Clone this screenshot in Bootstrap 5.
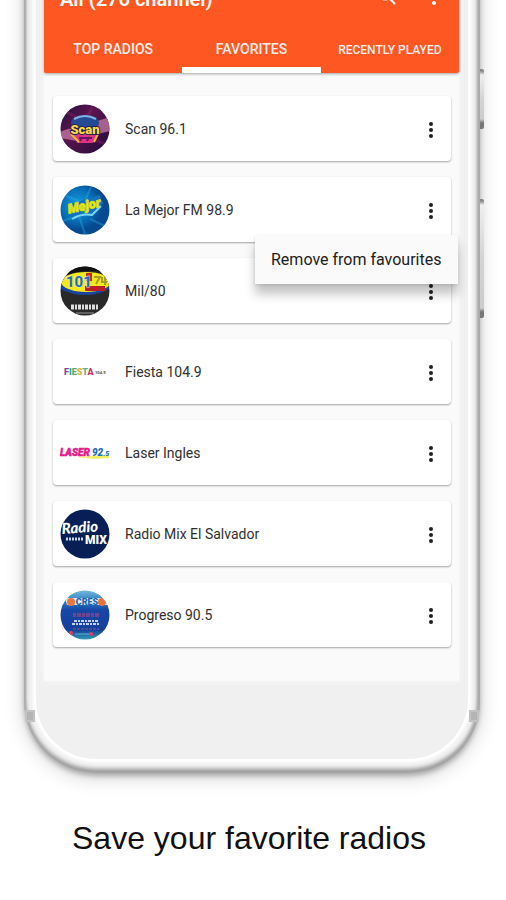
<!DOCTYPE html>
<html lang="en">
<head>
<meta charset="utf-8">
<meta name="viewport" content="width=device-width, initial-scale=1">
<title>Favorite radios</title>
<link href="https://cdn.jsdelivr.net/npm/bootstrap@5.3.0/dist/css/bootstrap.min.css" rel="stylesheet">
<style>
  body { font-family: Roboto, "Liberation Sans", sans-serif; background: #fff; overflow: hidden; }
  .phone {
    margin: -24px 26px 0 24px; padding: 0 12px 14px; border-radius: 0 0 72px 72px;
    background: #f4f4f4;
    box-shadow: inset 2px 0 2px #aaa, inset -3px 0 3px #a8a8a8, inset 0 -4px 4px #999, inset 0 0 9px #bbb,
      0 3px 5px rgba(0,0,0,.25), 0 4px 20px rgba(0,0,0,.18);
  }
  .face { background: #f0f0f0; border-radius: 0 0 60px 60px; padding: 0 9px 78px 8px; box-shadow: 0 0 2px 3px #fff; }
  .side-key { position: absolute; left: 100%; width: 4px; background: linear-gradient(#888 0 2px, #eee 6px, #d4d4d4 50%, #ccc calc(100% - 10px), #777 calc(100% - 6px)); border-radius: 0 2px 2px 0; }
  .key-up { top: 93px; height: 60px; }
  .key-down { top: 223px; height: 119px; }
  .antenna { position: absolute; bottom: 51px; width: 10px; height: 12px; background: #b4b4b4; border: 2px solid #c2c2c2; }
  .antenna-l { left: 1px; }
  .antenna-r { right: 1px; }
  .screen { background: #fafafa; box-shadow: 0 0 6px #fafafa; padding-bottom: 34px; }
  .appbar { background: #ff5722; color: #fff; box-shadow: 0 1px 3px rgba(0,0,0,.35); border-radius: 0 0 2px 2px; }
  .toolbar { height: 46px; padding: 0 16px; }
  .toolbar h1 { font-size: 20px; line-height: 24px; font-weight: 600; }
  .tool-icons { gap: 26px; padding-bottom: 4px; }
  .icon-btn { border: 0; background: none; padding: 0; line-height: 0; color: inherit; }
  .tabs button { height: 51px; padding: 10px 0 0; border: 0; border-bottom: 6px solid transparent; background: none; color: #fff0eb; font-size: 14px; font-weight: 500; white-space: nowrap; }
  .tabs button.active { border-bottom-color: #fff; }
  .tabs button.tab-small { font-size: 12px; }
  .stations { gap: 16px; padding: 23px 8px 0 9px; }
  .station { height: 65px; padding: 0 12px 0 7px; background: #fff; border-radius: 4px; box-shadow: 0 1px 2px rgba(0,0,0,.35); font-size: 14px; line-height: 20px; color: #303030; }
  .station-name { margin-left: 15px; }
  .popup { right: -7px; top: 58px; width: 203px; z-index: 5; background: #fafafa; box-shadow: 0 10px 10px rgba(0,0,0,.24), 0 1px 3px rgba(0,0,0,.12); }
  .popup button { height: 49px; padding: 0 16px; border: 0; background: none; font-size: 16px; color: #202020; white-space: nowrap; }
  .caption { margin: 45px 8px 0 0; font-family: "Liberation Sans", Arial, sans-serif; font-size: 32px; line-height: 40px; color: #101010; }
</style>
</head>
<body>
<main class="phone position-relative">
  <span class="side-key key-up"></span>
  <span class="side-key key-down"></span>
  <span class="antenna antenna-l"></span>
  <span class="antenna antenna-r"></span>
  <div class="face">
    <div class="screen">
      <header class="appbar">
        <div class="toolbar d-flex align-items-center justify-content-between">
          <h1 class="m-0">All (276 channel)</h1>
          <div class="tool-icons d-flex align-items-center">
            <button class="icon-btn" type="button" aria-label="Search"><svg width="24" height="24" viewBox="0 0 24 24" fill="none" stroke="currentColor" stroke-width="2"><circle cx="10" cy="9" r="5.500"/><path d="M14 13l6 6"/></svg></button>
            <button class="icon-btn" type="button" aria-label="More options"><svg width="18" height="24" viewBox="0 0 18 24" fill="currentColor"><circle cx="9" cy="6" r="2"/><circle cx="9" cy="12" r="2"/><circle cx="9" cy="18" r="2"/></svg></button>
          </div>
        </div>
        <nav class="tabs row g-0" aria-label="Radio lists">
          <button class="col-4" type="button">TOP RADIOS</button>
          <button class="col-4 active" type="button">FAVORITES</button>
          <button class="col-4 tab-small" type="button">RECENTLY PLAYED</button>
        </nav>
      </header>

      <ul class="stations list-unstyled d-flex flex-column m-0">
        <li class="station d-flex align-items-center">
          <svg width="50" height="50" viewBox="0 0 50 50" aria-hidden="true">
            <defs><clipPath id="disc"><circle cx="25" cy="25" r="24.500"/></clipPath>
            <linearGradient id="night" x1="0" y1="0" x2="1" y2="1"><stop offset="0" stop-color="#241040"/><stop offset=".4" stop-color="#5c1650"/><stop offset="1" stop-color="#200a38"/></linearGradient></defs>
            <g clip-path="url(#disc)"><path fill="url(#night)" d="M0 0h50v50H0z"/>
              <path d="M0 28Q12 23 20 24L34 18 50 13V27L34 31 17 37 0 34Z" fill="#c97ba5" opacity=".75"/>
              <path d="M6 8l15 7M32 4l-5 9M45 40l-12-5" stroke="#a02a70" stroke-width="3" opacity=".3"/>
              <ellipse cx="25" cy="19" rx="14" ry="8" fill="#244a91"/><path d="M14 15q11-6 22 0" stroke="#80b3e7" stroke-width="2" fill="none"/>
              <path d="M14 28l22-3 1 7-4 7H17z" fill="#de3486"/><path d="M11 30l8 8M39 28l-5 10" stroke="#efb731" stroke-width="2"/><path d="M19 34h13M20 37l2-4M27 37l2-4" stroke="#6b1467" stroke-width="2"/>
              <text x="25" y="30" text-anchor="middle" font-family="Roboto" font-weight="900" font-size="13" fill="#ffd94a" stroke="#26204c" stroke-width="2" paint-order="stroke">Scan</text></g>
          </svg>
          <span class="station-name">Scan 96.1</span>
          <button class="icon-btn ms-auto" type="button" aria-label="Options for Scan 96.1"><svg width="16" height="20" viewBox="0 0 16 20" fill="#202020"><circle cx="8" cy="5" r="2"/><circle cx="8" cy="11" r="2"/><circle cx="8" cy="17" r="2"/></svg></button>
        </li>
        <li class="station d-flex align-items-center position-relative">
          <svg width="50" height="50" viewBox="0 0 50 50" aria-hidden="true">
            <defs><radialGradient id="sea" cx=".35" cy=".4"><stop offset="0" stop-color="#159ee2"/><stop offset=".6" stop-color="#0872bb"/><stop offset="1" stop-color="#064a91"/></radialGradient></defs>
            <g clip-path="url(#disc)"><path fill="url(#sea)" d="M0 0h50v50H0z"/>
              <path d="M4 10l20 8L31 2M2 36l17-5 6 18M30 34l17 8" stroke="#35b4e9" stroke-width="2" fill="none" opacity=".35"/>
              <path d="M8 20L39 10l4 8-9 10L12 34Z" fill="#1273bd"/><path d="M12 34q10-6 20-4l9-9" stroke="#79d7ff" stroke-width="2" fill="none"/>
              <text x="25" y="25" text-anchor="middle" transform="rotate(-12 25 25)" font-family="Roboto" font-weight="900" font-style="italic" font-size="13" fill="#f3ed1f" stroke="#d3dc18" stroke-width="1">Mejor</text></g>
          </svg>
          <span class="station-name">La Mejor FM 98.9</span>
          <button class="icon-btn ms-auto" type="button" aria-label="Options for La Mejor FM 98.9"><svg width="16" height="20" viewBox="0 0 16 20" fill="#202020"><circle cx="8" cy="5" r="2"/><circle cx="8" cy="11" r="2"/><circle cx="8" cy="17" r="2"/></svg></button>
          <div class="popup position-absolute" role="menu"><button class="w-100 text-start" type="button" role="menuitem">Remove from favourites</button></div>
        </li>
        <li class="station d-flex align-items-center">
          <svg width="50" height="50" viewBox="0 0 50 50" aria-hidden="true">
            <g clip-path="url(#disc)"><path fill="#292929" d="M0 0h50v50H0z"/><path d="M0 0h50v8Q25 0 0 12Z" fill="#111"/>
              <ellipse cx="25" cy="18" rx="26" ry="11" fill="#1b449f"/><ellipse cx="26" cy="16" rx="25" ry="10" fill="#f4e91c"/>
              <path d="M26 7h6v8h-6z" fill="#c62b22"/><path d="M25 20h20v5H25z" fill="#b91f24"/>
              <text x="6" y="21" font-family="Roboto" font-weight="700" font-size="15" fill="#2369b7" stroke="#d6e8dd" stroke-width="1" paint-order="stroke">101</text>
              <path d="M34 11h6l-4 7M42 11v5h5M45 11v8" fill="none" stroke="#a99b27" stroke-width="2"/>
              <path d="M11 41h28" stroke="#ddd" stroke-width="5" stroke-dasharray="3 1 2 1"/><path d="M16 47h18" stroke="#999"/></g>
          </svg>
          <span class="station-name">Mil/80</span>
          <button class="icon-btn ms-auto" type="button" aria-label="Options for Mil/80"><svg width="16" height="20" viewBox="0 0 16 20" fill="#202020"><circle cx="8" cy="5" r="2"/><circle cx="8" cy="11" r="2"/><circle cx="8" cy="17" r="2"/></svg></button>
        </li>
        <li class="station d-flex align-items-center">
          <svg width="50" height="50" viewBox="0 0 50 50" aria-hidden="true">
            <text x="4" y="28" font-family="Roboto" font-weight="900" font-size="9"><tspan fill="#7c4a98">F</tspan><tspan fill="#28a7a6">I</tspan><tspan fill="#56af61">E</tspan><tspan fill="#e2ae38">S</tspan><tspan fill="#57b67c">T</tspan><tspan fill="#cc355c">A</tspan></text>
            <text x="35" y="27" font-family="Roboto" font-weight="900" font-size="4" fill="#555">104.9</text>
          </svg>
          <span class="station-name">Fiesta 104.9</span>
          <button class="icon-btn ms-auto" type="button" aria-label="Options for Fiesta 104.9"><svg width="16" height="20" viewBox="0 0 16 20" fill="#202020"><circle cx="8" cy="5" r="2"/><circle cx="8" cy="11" r="2"/><circle cx="8" cy="17" r="2"/></svg></button>
        </li>
        <li class="station d-flex align-items-center">
          <svg width="50" height="50" viewBox="0 0 50 50" aria-hidden="true">
            <path d="M17 29l32-2v3l-15 1z" fill="#f4ee67"/>
            <text x="0" y="28" font-family="Roboto" font-weight="900" font-style="italic" font-size="10" fill="#e5198b" stroke="#e5198b" stroke-width="0.500">LASER</text>
            <text x="32" y="28" font-family="Roboto" font-weight="900" font-style="italic" font-size="10" fill="#246bb0">92<tspan font-size="7">.5</tspan></text>
          </svg>
          <span class="station-name">Laser Ingles</span>
          <button class="icon-btn ms-auto" type="button" aria-label="Options for Laser Ingles"><svg width="16" height="20" viewBox="0 0 16 20" fill="#202020"><circle cx="8" cy="5" r="2"/><circle cx="8" cy="11" r="2"/><circle cx="8" cy="17" r="2"/></svg></button>
        </li>
        <li class="station d-flex align-items-center">
          <svg width="50" height="50" viewBox="0 0 50 50" aria-hidden="true">
            <g clip-path="url(#disc)"><path fill="#071f55" d="M0 0h50v50H0z"/>
              <text x="2" y="25" transform="rotate(-4 2 25)" font-family="Lato" font-weight="900" font-style="italic" font-size="15" fill="#fff">Radio</text>
              <text x="25" y="35" font-family="Roboto" font-weight="900" font-size="12" fill="#fff">MIX</text>
              <path d="M6 30h18" stroke="#cbd4e8" stroke-width="3" stroke-dasharray="2 1"/></g>
          </svg>
          <span class="station-name">Radio Mix El Salvador</span>
          <button class="icon-btn ms-auto" type="button" aria-label="Options for Radio Mix El Salvador"><svg width="16" height="20" viewBox="0 0 16 20" fill="#202020"><circle cx="8" cy="5" r="2"/><circle cx="8" cy="11" r="2"/><circle cx="8" cy="17" r="2"/></svg></button>
        </li>
        <li class="station d-flex align-items-center">
          <svg width="50" height="50" viewBox="0 0 50 50" aria-hidden="true">
            <defs><linearGradient id="dusk" x1="0" y1="0" x2="0" y2="1"><stop offset="0" stop-color="#79b9dd"/><stop offset=".25" stop-color="#2176bf"/><stop offset=".4" stop-color="#1947a6"/><stop offset=".8" stop-color="#153f9b"/><stop offset="1" stop-color="#36a2b5"/></linearGradient></defs>
            <g clip-path="url(#disc)"><path fill="url(#dusk)" d="M0 0h50v50H0z"/><path d="M5 8h42v7H7z" fill="#e3edf6"/>
              <circle cx="11" cy="12" r="4" fill="#ec753b"/><circle cx="42" cy="12" r="4" fill="#ed713b"/>
              <text x="27" y="15" text-anchor="middle" font-family="Roboto" font-weight="900" font-size="9" fill="#1766b4">CRES</text>
              <path d="M13 25h26" stroke="#70458f" stroke-width="4" stroke-dasharray="3 1 4 1"/>
              <path d="M14 31h24M12 34h27" stroke="#c3d0ee" stroke-width="2" stroke-dasharray="3 1 2 1"/><path d="M13 39h26" stroke="#8c5184" stroke-dasharray="3 1"/><path d="M15 44h14" stroke="#58b7df"/><circle cx="31" cy="44" r="2" fill="#e13e61"/><circle cx="11" cy="43" r="2" fill="#e13e61"/></g>
          </svg>
          <span class="station-name">Progreso 90.5</span>
          <button class="icon-btn ms-auto" type="button" aria-label="Options for Progreso 90.5"><svg width="16" height="20" viewBox="0 0 16 20" fill="#202020"><circle cx="8" cy="5" r="2"/><circle cx="8" cy="11" r="2"/><circle cx="8" cy="17" r="2"/></svg></button>
        </li>
      </ul>
    </div>
  </div>
</main>
<p class="caption text-center">Save your favorite radios</p>
<script src="https://cdn.jsdelivr.net/npm/bootstrap@5.3.0/dist/js/bootstrap.bundle.min.js"></script>
</body>
</html>
